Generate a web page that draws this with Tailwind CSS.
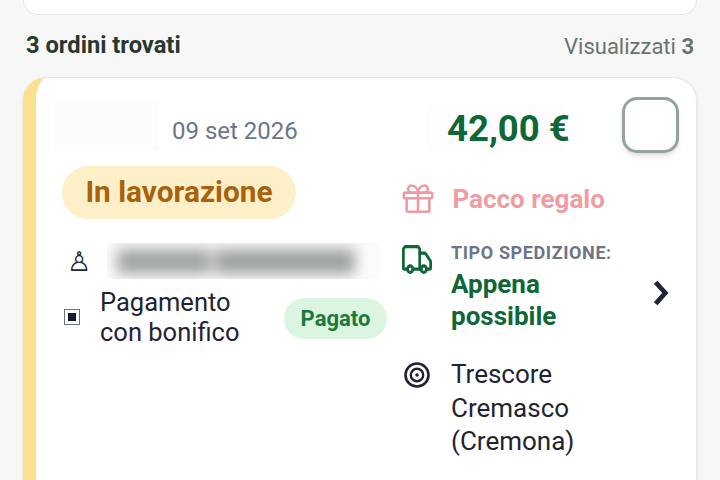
<!DOCTYPE html>
<html><head><meta charset="utf-8"><script src="https://cdn.jsdelivr.net/npm/@tailwindcss/browser@4"></script></head>
<body class="m-0 w-[720px] h-[480px] overflow-hidden bg-[#f7f7f7] font-['Roboto',sans-serif]">
<div class="h-[480px] overflow-hidden px-[23px]">
  <div class="h-[15px] bg-white border border-t-0 border-[#e3e5e8] rounded-b-[24px]"></div>
  <div class="mt-[15px] h-[32px] flex items-center justify-between pl-[3px] pr-[3px]">
    <span class="text-[23.7px] font-bold text-[#27382f]">3 ordini trovati</span>
    <span class="text-[22px] text-[#6b7370]">Visualizzati <b class="font-bold">3</b></span>
  </div>
  <div class="mt-[15px] h-[440px] bg-white border border-[#e5e7eb] border-l-[13px] border-l-[#fde08f] rounded-[24px] shadow-sm flex relative">
    <div class="w-[351px] shrink-0 pl-[18px] pt-[22px] flex flex-col">
      <div class="flex items-center h-[50px]">
        <div class="w-[104px] h-[50px] bg-[#fcfcfc]"></div>
        <span class="ml-[14px] pt-[11px] text-[24px] text-[#6b7689]">09 set 2026</span>
      </div>
      <div class="mt-[16px] ml-[8px] self-start h-[53px] w-[234px] flex items-center justify-center rounded-full bg-[#fdefc8] text-[29.8px] font-bold text-[#a9620a]">In lavorazione</div>
      <div class="mt-[24px] flex items-center h-[36px]">
        <span class="w-[53px] pl-[13px] text-[27px] leading-none text-[#1f2433] font-['DejaVu_Sans']">♙</span>
        <div class="w-[273px] h-[36px] bg-[#fbfbfb] overflow-hidden flex items-center">
          <div class="ml-[10px] h-[25px] w-[254px] flex gap-[4px] blur-[7px]">
            <span class="w-[94px] bg-[#a2a6a6]"></span>
            <span class="w-[140px] bg-[#9ea2a2]"></span>
          </div>
        </div>
      </div>
      <div class="mt-[8px] flex items-center">
        <span class="w-[46px] pl-[10px] shrink-0">
          <span class="w-[16px] h-[16px] border-[1.5px] border-[#6f7378] flex items-center justify-center"><span class="w-[8px] h-[8px] bg-[#161b30]"></span></span>
        </span>
        <span class="w-[184px] pr-[30px] text-[25.5px] leading-[30px] text-[#1f2433]">Pagamento con bonifico</span>
        <span class="mt-[2px] w-[103px] h-[41px] flex items-center justify-center rounded-full bg-[#dcf5e0] text-[22px] font-bold text-[#1c7a3c]">Pagato</span>
      </div>
    </div>
    <div class="flex-1 pl-[15px] pt-[27px] flex flex-col relative">
      <div class="ml-[25px] h-[46px] w-[136px] pl-[20px] pt-[3px] bg-[#fdfdfd] flex items-center text-[36.5px] font-bold text-[#0f6636] whitespace-nowrap">42,00 €</div>
      <div class="mt-[28px] flex items-center h-[40px]">
        <svg class="ml-[-1px] w-[34px] h-[34px] text-[#ef9aa0] shrink-0" viewBox="0 0 24 24" fill="none" stroke="currentColor" stroke-width="1.8" stroke-linecap="round" stroke-linejoin="round"><rect x="2" y="7.5" width="20" height="4" rx="1"/><path d="M12 7.5V21"/><path d="M20 11.5V20a1 1 0 0 1-1 1H5a1 1 0 0 1-1-1v-8.5"/><path d="M7.5 7.5a2.5 2.5 0 0 1 0-5C10 2.5 12 5 12 7.5c0-2.5 2-5 4.5-5a2.5 2.5 0 0 1 0 5"/></svg>
        <span class="ml-[17.5px] text-[26px] font-bold text-[#f09ca2] whitespace-nowrap">Pacco regalo</span>
      </div>
      <div class="mt-[23px] flex">
        <svg class="w-[30px] h-[29px] text-[#0f6636] shrink-0 mt-[3px]" viewBox="1 3 22 18" preserveAspectRatio="none" fill="none" stroke="currentColor" stroke-width="2" stroke-linecap="round" stroke-linejoin="round"><path d="M14 18V6a2 2 0 0 0-2-2H4a2 2 0 0 0-2 2v11a1 1 0 0 0 1 1h2"/><path d="M15 18H9"/><path d="M19 18h2a1 1 0 0 0 1-1v-3.65a1 1 0 0 0-.22-.624l-3.48-4.35A1 1 0 0 0 17.52 8H14"/><circle cx="17" cy="18" r="2"/><circle cx="7" cy="18" r="2"/></svg>
        <div class="ml-[18px] w-[170px]">
          <div class="ml-[1px] text-[18px] leading-[22px] font-bold text-[#6b7689] whitespace-nowrap tracking-[0.6px]">TIPO SPEDIZIONE:</div>
          <div class="ml-[1px] mt-[4px] w-[120px] text-[26px] leading-[32px] font-bold text-[#0f6636]">Appena possibile</div>
        </div>
        <svg class="absolute left-[265px] top-[201px] w-[18px] h-[28px] text-[#1f2433]" viewBox="0 0 16 26" fill="none" stroke="currentColor" stroke-width="4.4" stroke-linejoin="miter"><path d="M3 3l9 10-9 10"/></svg>
      </div>
      <div class="mt-[26px] flex">
        <svg class="w-[28px] h-[28px] text-[#1f2433] shrink-0 mt-[3px] ml-[1px]" viewBox="0 0 28 28" fill="none" stroke="currentColor"><circle cx="14" cy="14" r="11.5" stroke-width="2.6"/><circle cx="14" cy="14" r="6.2" stroke-width="2.4"/><circle cx="14" cy="14" r="1.8" fill="currentColor" stroke="none"/></svg>
        <div class="ml-[20px] w-[140px] text-[26px] leading-[33.5px] text-[#1f2433]">Trescore Cremasco (Cremona)</div>
      </div>
      <div class="absolute left-[235px] top-[19px] w-[57px] h-[56px] rounded-[15px] border-[3px] border-[#96a39d] bg-white shadow-md"></div>
    </div>
  </div>
</div>
</body></html>
